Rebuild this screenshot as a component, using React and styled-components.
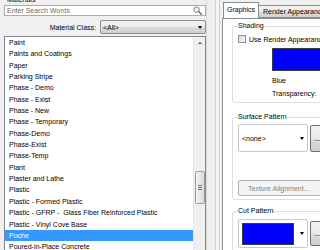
import React from 'react';
import styled, { createGlobalStyle } from 'styled-components';

const Global = createGlobalStyle`
  html, body { margin: 0; padding: 0; background: #f0f0f0; }
  body { font-family: "Liberation Sans", Arial, sans-serif; }
`;

const Window = styled.div`
  width: 320px;
  height: 250px;
  overflow: hidden;
  background: #f0f0f0;
  display: flex;
  font-size: 7px;
  color: #000;
`;

const LeftPane = styled.div`
  width: 206px;
  flex: none;
  box-sizing: border-box;
  padding-left: 4px;
  display: flex;
  flex-direction: column;
`;

const Title = styled.div`
  line-height: 7px;
  height: 7px;
  margin-top: -4px;
  padding-left: 3px;
`;

const SearchBox = styled.div`
  margin-top: 2px;
  height: 15px;
  box-sizing: border-box;
  border: 1px solid #abadb3;
  background: #fff;
  display: flex;
  align-items: center;
  justify-content: space-between;
  padding: 0 3px 0 2px;
  color: #6d6d6d;
`;

const ClassRow = styled.div`
  margin-top: 4px;
  height: 14px;
  display: flex;
  align-items: center;
  justify-content: flex-end;
  gap: 4px;
`;

const Combo = styled.div`
  width: 106px;
  height: 14px;
  box-sizing: border-box;
  border: 1px solid #8e8f8f;
  border-radius: 2px;
  background: linear-gradient(#f2f2f2, #ebebeb 50%, #dddddd 51%, #cfcfcf);
  display: flex;
  align-items: center;
  justify-content: space-between;
  padding: 0 3px 0 2px;
`;

const Arrow = styled.span`
  width: 0;
  height: 0;
  border-left: 2.5px solid transparent;
  border-right: 2.5px solid transparent;
  border-top: 3px solid #000;
`;

const List = styled.div`
  margin-top: 2px;
  height: 220px;
  flex: none;
  box-sizing: border-box;
  border: 1px solid #828790;
  background: #fff;
  display: flex;
`;

const Items = styled.div`
  flex: 1;
  display: flex;
  flex-direction: column;
`;

const Item = styled.div`
  height: 11.35px;
  line-height: 11.35px;
  flex: none;
  padding-left: 4px;
  white-space: nowrap;
  overflow: hidden;
  background: ${p => (p.$selected ? '#3399ff' : 'transparent')};
  color: ${p => (p.$selected ? '#fff' : '#000')};
`;

const ScrollBar = styled.div`
  width: 11px;
  flex: none;
  background: #f0f0f0;
  border-left: 1px solid #e6e6e6;
  display: flex;
  flex-direction: column;
  align-items: center;
`;

const ScrollUp = styled.div`
  height: 12px;
  width: 100%;
  display: flex;
  align-items: center;
  justify-content: center;
`;

const UpArrow = styled.span`
  width: 0;
  height: 0;
  border-left: 2px solid transparent;
  border-right: 2px solid transparent;
  border-bottom: 2.5px solid #4d4d4d;
`;

const Thumb = styled.div`
  margin-top: 122px;
  width: 10px;
  height: 33px;
  box-sizing: border-box;
  border: 1px solid #9b9b9b;
  border-radius: 2px;
  background: linear-gradient(90deg, #f4f4f4, #e8e8e8 50%, #d9d9d9);
  display: flex;
  flex-direction: column;
  align-items: center;
  justify-content: center;
  gap: 1px;
`;

const Grip = styled.span`
  width: 4px;
  height: 1px;
  background: #6b6b6b;
`;

const Splitter = styled.div`
  width: 14px;
  flex: none;
  display: flex;
`;

const SplitGap = styled.div`
  width: 8px;
  border-left: 1px solid #d9d9d9;
  border-right: 1px solid #d4d4d4;
  background: #f0f0f0;
`;

const SplitEdge = styled.div`
  flex: 1;
  background: #f4f4f4;
  border-right: 1px solid #d0d0d0;
`;

const RightPane = styled.div`
  flex: none;
  width: 110px;
  padding: 3px 0 0 2px;
  display: flex;
  flex-direction: column;
`;

const TabRow = styled.div`
  display: flex;
  align-items: flex-end;
  height: 15px;
  position: relative;
  z-index: 1;
`;

const Tab = styled.div`
  height: ${p => (p.$active ? 16 : 13)}px;
  box-sizing: border-box;
  border: 1px solid #898c95;
  border-bottom: ${p => (p.$active ? 'none' : '1px solid #898c95')};
  margin-left: ${p => (p.$active ? 1 : -1)}px;
  padding: 0 ${p => (p.$active ? 3 : 4)}px;
  background: ${p => (p.$active ? '#fff' : 'linear-gradient(#f2f2f2, #ebebeb 50%, #dddddd 51%, #cfcfcf)')};
  line-height: ${p => (p.$active ? 13 : 11)}px;
  white-space: nowrap;
`;

const TabBody = styled.div`
  flex: 1;
  box-sizing: border-box;
  border: 1px solid #898c95;
  background: #fff;
  padding: 3px 0 0 9px;
  display: flex;
  flex-direction: column;
`;

const Group = styled.fieldset`
  margin: ${p => p.$top || 0}px 0 0 0;
  padding: ${p => p.$pt || 3}px 0 ${p => p.$pb || 3}px 5px;
  border: 1px solid #d5dfe5;
  border-radius: 3px;
  width: 110px;
  box-sizing: border-box;
  min-width: 0;
`;

const Legend = styled.legend`
  padding: 0;
  line-height: 8px;
  font-size: 7px;
`;

const CheckRow = styled.div`
  display: flex;
  align-items: center;
  gap: 3px;
  height: 8px;
  white-space: nowrap;
`;

const CheckBox = styled.span`
  width: 8px;
  height: 8px;
  box-sizing: border-box;
  border: 1px solid #8f8f8f;
  background: linear-gradient(135deg, #dcdcdc, #f6f6f6);
`;

const ColorCol = styled.div`
  margin-left: 34px;
  display: flex;
  flex-direction: column;
`;

const Swatch = styled.div`
  margin-top: ${p => p.$top || 0}px;
  width: ${p => p.$w}px;
  height: ${p => p.$h}px;
  box-sizing: border-box;
  background: #0000ff;
  border: 1px solid #3c3c3c;
`;

const Caption = styled.div`
  margin-top: ${p => p.$top}px;
  line-height: 8px;
  white-space: nowrap;
`;

const PatternRow = styled.div`
  display: flex;
  gap: 2px;
  align-items: flex-start;
`;

const PatternCombo = styled.div`
  width: 70px;
  height: ${p => p.$h}px;
  box-sizing: border-box;
  border: 1px solid #c6c9ce;
  border-radius: 2px;
  background: #fff;
  display: flex;
  align-items: center;
  justify-content: space-between;
  padding: 0 3px 0 3px;
`;

const DotsButton = styled.div`
  margin-top: ${p => p.$top || 0}px;
  width: 14px;
  height: ${p => p.$h}px;
  box-sizing: border-box;
  border: 1px solid #707070;
  border-radius: 2px;
  background: linear-gradient(#f2f2f2, #ebebeb 50%, #dddddd 51%, #cfcfcf);
  display: flex;
  align-items: center;
  justify-content: center;
  line-height: 1;
`;

const DisabledButton = styled.div`
  margin-top: 28px;
  width: 90px;
  height: 16px;
  box-sizing: border-box;
  border: 1px solid #adb2b5;
  border-radius: 2px;
  background: #f4f4f4;
  color: #838383;
  display: flex;
  align-items: center;
  padding-left: 9px;
  white-space: nowrap;
`;

const SearchIcon = () => (
  <svg width="9" height="9" viewBox="0 0 9 9">
    <circle cx="3.6" cy="3.6" r="2.7" fill="#eaf2f8" stroke="#6f8798" strokeWidth="1" />
    <line x1="5.6" y1="5.6" x2="8.3" y2="8.3" stroke="#5a6b78" strokeWidth="1.4" strokeLinecap="round" />
  </svg>
);

const materials = [
  'Paint',
  'Paints and Coatings',
  'Paper',
  'Parking Stripe',
  'Phase - Demo',
  'Phase - Exist',
  'Phase - New',
  'Phase - Temporary',
  'Phase-Demo',
  'Phase-Exist',
  'Phase-Temp',
  'Plant',
  'Plaster and Lathe',
  'Plastic',
  'Plastic - Formed Plastic',
  'Plastic - GFRP -  Glass Fiber Reinforced Plastic',
  'Plastic - Vinyl Cove Base',
  'Poche',
  'Poured-in-Place Concrete',
];

export default function App() {
  return (
    <>
      <Global />
      <Window>
        <LeftPane>
          <Title>Materials</Title>
          <SearchBox>
            <span>Enter Search Words</span>
            <SearchIcon />
          </SearchBox>
          <ClassRow>
            <span>Material Class:</span>
            <Combo>
              <span>&lt;All&gt;</span>
              <Arrow />
            </Combo>
          </ClassRow>
          <List>
            <Items>
              {materials.map(m => (
                <Item key={m} $selected={m === 'Poche'}>
                  {m.replace(/  /g, '\u00a0 ')}
                </Item>
              ))}
            </Items>
            <ScrollBar>
              <ScrollUp>
                <UpArrow />
              </ScrollUp>
              <Thumb>
                <Grip />
                <Grip />
                <Grip />
              </Thumb>
            </ScrollBar>
          </List>
        </LeftPane>
        <Splitter>
          <SplitGap />
          <SplitEdge />
        </Splitter>
        <RightPane>
          <TabRow>
            <Tab $active>Graphics</Tab>
            <Tab>Render Appearance</Tab>
          </TabRow>
          <TabBody>
            <Group $pt={5} $pb={4}>
              <Legend>Shading</Legend>
              <CheckRow>
                <CheckBox />
                <span>Use Render Appearance</span>
              </CheckRow>
              <ColorCol>
                <Swatch $top={5} $w={60} $h={23} />
                <Caption $top={6}>Blue</Caption>
                <Caption $top={5}>Transparency:</Caption>
              </ColorCol>
            </Group>
            <Group $top={10} $pt={3} $pb={3}>
              <Legend>Surface Pattern</Legend>
              <PatternRow>
                <PatternCombo $h={28}>
                  <span>&lt;none&gt;</span>
                  <Arrow />
                </PatternCombo>
                <DotsButton $top={1} $h={27}>...</DotsButton>
              </PatternRow>
              <DisabledButton>Texture Alignment...</DisabledButton>
            </Group>
            <Group $top={7} $pt={4} $pb={3}>
              <Legend>Cut Pattern</Legend>
              <PatternRow>
                <PatternCombo $h={29}>
                  <Swatch $w={52} $h={22} />
                  <Arrow />
                </PatternCombo>
                <DotsButton $top={2} $h={25}>...</DotsButton>
              </PatternRow>
            </Group>
          </TabBody>
        </RightPane>
      </Window>
    </>
  );
}
